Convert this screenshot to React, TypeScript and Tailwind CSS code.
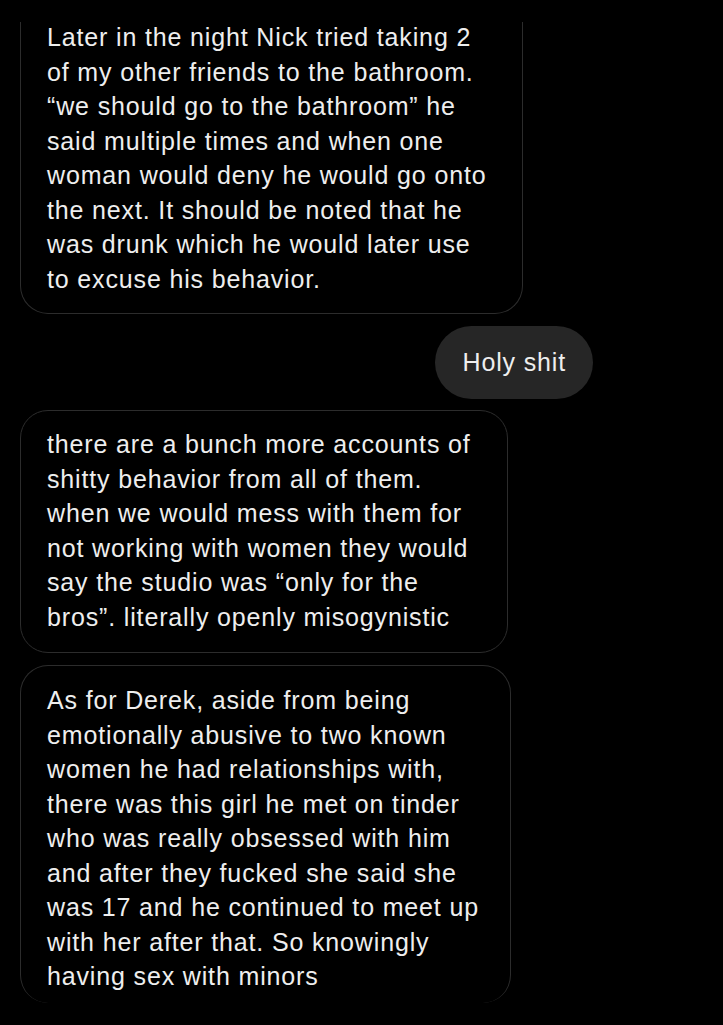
import React from "react";

const b1 = [
  "Later in the night Nick tried taking 2",
  "of my other friends to the bathroom.",
  "\u201Cwe should go to the bathroom\u201D he",
  "said multiple times and when one",
  "woman would deny he would go onto",
  "the next. It should be noted that he",
  "was drunk which he would later use",
  "to excuse his behavior.",
];
const b3 = [
  "there are a bunch more accounts of",
  "shitty behavior from all of them.",
  "when we would mess with them for",
  "not working with women they would",
  "say the studio was \u201Conly for the",
  "bros\u201D. literally openly misogynistic",
];
const b4 = [
  "As for Derek, aside from being",
  "emotionally abusive to two known",
  "women he had relationships with,",
  "there was this girl he met on tinder",
  "who was really obsessed with him",
  "and after they fucked she said she",
  "was 17 and he continued to meet up",
  "with her after that. So knowingly",
  "having sex with minors",
];

function Lines({ lines }: { lines: string[] }) {
  return (
    <>
      {lines.map((l, i) => (
        <div key={i} className="whitespace-nowrap h-[34.5px] leading-[34.5px]">
          {l}
        </div>
      ))}
    </>
  );
}

export default function App() {
  return (
    <div
      className="w-[723px] h-[1025px] bg-black overflow-hidden text-[25px] tracking-[0.85px] text-[#eeeeee]"
      style={{ fontFamily: '"Liberation Sans", Arial, sans-serif' }}
    >
      <div className="flex flex-col pl-[20px]">
        <div className="mt-[22px] w-[503px] border border-t-0 border-[#2c2c2c] rounded-b-[28px] pl-[26px] pb-[17px]">
          <div className="-mt-[2px]">
            <Lines lines={b1} />
          </div>
        </div>
        <div className="mt-[12px] self-end mr-[130px] h-[73px] rounded-full bg-[#262626] px-[27px] flex items-center">
          Holy shit
        </div>
        <div className="mt-[11px] w-[488px] border border-[#2c2c2c] rounded-[28px] pl-[26px] pt-[16px] pb-[18px]">
          <Lines lines={b3} />
        </div>
        <div className="mt-[12px] w-[491px] h-[338px] border border-b-0 border-[#2c2c2c] rounded-t-[28px] rounded-b-[28px] pl-[26px] pt-[17px]">
          <Lines lines={b4} />
        </div>
      </div>
    </div>
  );
}
